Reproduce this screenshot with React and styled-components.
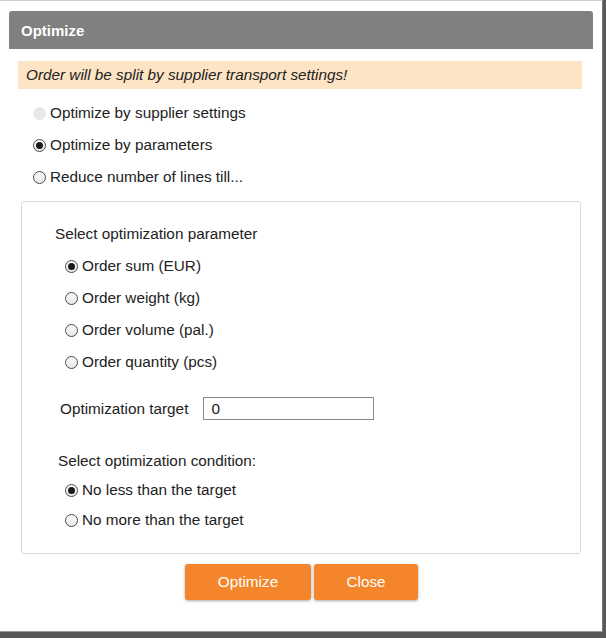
import styled, { createGlobalStyle, css } from "styled-components";

const Global = createGlobalStyle`
    html, body {
        margin: 0;
        padding: 0;
        background: #595959;
    }
    body {
        font-family: "Liberation Sans", Arial, sans-serif;
        color: #222;
    }
`
const Dialog = styled.div`
    width: 602px;
    height: 630px;
    background: #fff;
    border-top: 1px solid #cfcfcf;
    border-right: 1px solid #777;
    border-bottom: 1px solid #9a9a9a;
    display: flex;
    flex-direction: column;
`
const Header = styled.div`
    margin: 10px 9px 0 9px;
    height: 38px;
    background: #808080;
    border-radius: 3px 3px 0 0;
    display: flex;
    align-items: center;
    padding-left: 12px;
    color: #fff;
    font-weight: bold;
    font-size: 15px;
`
const Content = styled.div`
    padding: 12px 20px 0 18px;
    display: flex;
    flex-direction: column;
`
const Warning = styled.div`
    height: 28px;
    background: #fde4c4;
    display: flex;
    align-items: center;
    padding-left: 8px;
    font-style: italic;
    font-size: 15.3px;
    margin-bottom: 8px;
`
const Row = styled.label`
    height: ${p => p.h || 32}px;
    display: flex;
    align-items: center;
    padding-left: ${p => p.indent || 0}px;
    font-size: 15.3px;
    cursor: pointer;
`
const Dot = styled.span`
    width: 13px;
    height: 13px;
    box-sizing: border-box;
    border-radius: 50%;
    margin-right: 4px;
    display: flex;
    align-items: center;
    justify-content: center;
    flex-shrink: 0;
    ${p => p.disabled ? css`
        background: #e8e8e8;
    ` : css`
        border: 1px solid #4a4a4a;
        background: linear-gradient(#fbfbfb, #e9e9e9);
    `}
    &::after {
        content: "";
        display: ${p => p.checked ? "block" : "none"};
        width: 7px;
        height: 7px;
        border-radius: 50%;
        background: #1a1a1a;
    }
`
const Box = styled.div`
    margin: 8px 1px 0 3px;
    border: 1px solid #dadada;
    border-radius: 3px;
    padding: 16px 0 18px 33px;
    display: flex;
    flex-direction: column;
`
const Caption = styled.div`
    height: ${p => p.h || 32}px;
    display: flex;
    align-items: center;
    font-size: 15.3px;
    padding-left: ${p => p.indent || 0}px;
`
const TargetRow = styled.div`
    display: flex;
    align-items: center;
    margin: 19px 0 27px 5px;
    font-size: 15.3px;
`
const TargetInput = styled.input`
    margin-left: 15px;
    width: 171px;
    height: 23px;
    box-sizing: border-box;
    border: 1px solid #8a8a8a;
    padding: 0 7px;
    font-family: "Liberation Sans", Arial, sans-serif;
    font-size: 15.3px;
    color: #222;
    outline: none;
`
const Buttons = styled.div`
    display: flex;
    justify-content: center;
    gap: 3px;
    margin-top: 10px;
    padding-left: 3px;
`
const Button = styled.button`
    width: ${p => p.w}px;
    height: 36px;
    border: none;
    border-radius: 3px;
    background: #f4852a;
    color: #fff;
    font-family: "Liberation Sans", Arial, sans-serif;
    font-size: 15.3px;
    box-shadow: 0 1px 3px rgba(0, 0, 0, 0.35);
    cursor: pointer;
`

const Radio = ({ checked, disabled, indent, h, children }) => (
    <Row indent={indent} h={h}>
        <Dot checked={checked} disabled={disabled} />
        {children}
    </Row>
)

export default function App() {
    return (
        <>
            <Global />
            <Dialog>
                <Header>Optimize</Header>
                <Content>
                    <Warning>Order will be split by supplier transport settings!</Warning>
                    <Radio indent={15} disabled>Optimize by supplier settings</Radio>
                    <Radio indent={15} checked>Optimize by parameters</Radio>
                    <Radio indent={15}>Reduce number of lines till...</Radio>
                    <Box>
                        <Caption>Select optimization parameter</Caption>
                        <Radio indent={10} checked>Order sum (EUR)</Radio>
                        <Radio indent={10}>Order weight (kg)</Radio>
                        <Radio indent={10}>Order volume (pal.)</Radio>
                        <Radio indent={10}>Order quantity (pcs)</Radio>
                        <TargetRow>
                            Optimization target
                            <TargetInput type="text" defaultValue="0" />
                        </TargetRow>
                        <Caption indent={3} h={28}>Select optimization condition:</Caption>
                        <Radio indent={10} h={30} checked>No less than the target</Radio>
                        <Radio indent={10} h={30}>No more than the target</Radio>
                    </Box>
                    <Buttons>
                        <Button w={126}>Optimize</Button>
                        <Button w={104}>Close</Button>
                    </Buttons>
                </Content>
            </Dialog>
        </>
    )
}
